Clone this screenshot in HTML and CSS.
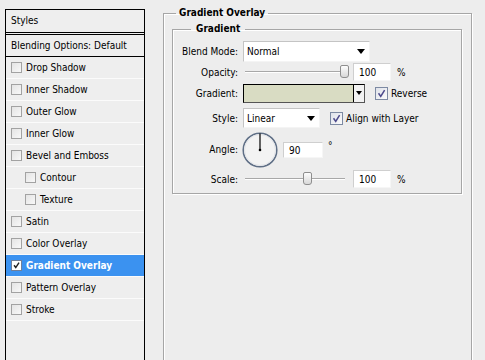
FILE: index.html
```html
<!DOCTYPE html>
<html lang="en">
<head>
  <meta charset="UTF-8" />
  <title>Layer Style - Gradient Overlay</title>
  <link rel="stylesheet" href="styles.css">
</head>
<body>
  <div class="dialog">

    <!-- styles list -->
    <div class="styles-list">
      <div class="list-head">Styles</div>
      <div class="list-blend">Blending Options: Default</div>
      <div class="list-item"><span class="cb"></span>Drop Shadow</div>
      <div class="list-item"><span class="cb"></span>Inner Shadow</div>
      <div class="list-item"><span class="cb"></span>Outer Glow</div>
      <div class="list-item"><span class="cb"></span>Inner Glow</div>
      <div class="list-item"><span class="cb"></span>Bevel and Emboss</div>
      <div class="list-item sub"><span class="cb"></span>Contour</div>
      <div class="list-item sub"><span class="cb"></span>Texture</div>
      <div class="list-item"><span class="cb"></span>Satin</div>
      <div class="list-item"><span class="cb"></span>Color Overlay</div>
      <div class="list-item active">
        <span class="cb checked">
          <svg viewBox="0 0 11 11"><path d="M2.5 5.2 L4.6 8 L8.6 2" fill="none" stroke="#222" stroke-width="1.8" /></svg>
        </span>Gradient Overlay
      </div>
      <div class="list-item"><span class="cb"></span>Pattern Overlay</div>
      <div class="list-item"><span class="cb"></span>Stroke</div>
    </div>

    <!-- settings -->
    <div class="panel">
      <fieldset class="group outer">
        <legend>Gradient Overlay</legend>
        <fieldset class="group inner">
          <legend>Gradient</legend>

          <div class="row r-blend">
            <span class="lbl">Blend Mode:</span>
            <div class="select blend-select">Normal<i class="arrow"></i></div>
          </div>

          <div class="row r-opacity">
            <span class="lbl">Opacity:</span>
            <div class="slider"><span class="thumb" style="left: 95px;"></span></div>
            <div class="num">100</div>
            <span class="unit">%</span>
          </div>

          <div class="row r-gradient">
            <span class="lbl">Gradient:</span>
            <div class="grad-box"><div class="grad-fill"></div><div class="grad-btn"><i class="arrow small"></i></div></div>
            <span class="check">
              <svg viewBox="0 0 13 13"><path d="M3 6.2 L5.6 10 L10.2 2.5" fill="none" stroke="#4d4a8c" stroke-width="1.8" /></svg>
            </span>
            <span class="check-lbl">Reverse</span>
          </div>

          <div class="row r-style">
            <span class="lbl">Style:</span>
            <div class="select style-select">Linear<i class="arrow"></i></div>
            <span class="check">
              <svg viewBox="0 0 13 13"><path d="M3 6.2 L5.6 10 L10.2 2.5" fill="none" stroke="#4d4a8c" stroke-width="1.8" /></svg>
            </span>
            <span class="check-lbl">Align with Layer</span>
          </div>

          <div class="row r-angle">
            <span class="lbl">Angle:</span>
            <svg class="dial" viewBox="0 0 36 36">
              <circle cx="18" cy="18" r="16.8" fill="#f3f3f3" stroke="#5f6f86" stroke-width="1.5" />
              <circle cx="18" cy="18" r="15.5" fill="none" stroke="#e2e4e8" stroke-width="1" />
              <line x1="18" y1="18" x2="18" y2="1.5" stroke="#000" stroke-width="1.2" />
              <circle cx="18" cy="18" r="1.3" fill="#000" />
            </svg>
            <div class="num angle-num">90</div>
            <span class="deg">°</span>
          </div>

          <div class="row r-scale">
            <span class="lbl">Scale:</span>
            <div class="slider"><span class="thumb" style="left: 58px;"></span></div>
            <div class="num">100</div>
            <span class="unit">%</span>
          </div>

        </fieldset>
      </fieldset>
    </div>

  </div>
</body>
</html>
```

FILE: styles.css
```css
body {
  margin: 0;
  background: #ededed;
  font-family: "DejaVu Sans Condensed", "Liberation Sans", sans-serif;
  font-size: 10px;
  color: #000;
  overflow: hidden;
}
.dialog {
  display: flex;
  gap: 18px;
  padding: 9px 0 0 5px;
  height: 360px;
  box-sizing: border-box;
  overflow: hidden;
}

/* styles list */
.styles-list {
  width: 140px;
  box-sizing: border-box;
  border: 1px solid #000;
  border-bottom: none;
  background: #eeeeee;
}
.list-head {
  height: 22px;
  line-height: 22px;
  padding-left: 5px;
  border-bottom: 3px double #000;
}
.list-blend {
  height: 21px;
  line-height: 21px;
  padding-left: 5px;
  border-bottom: 1px solid #000;
}
.list-item {
  height: 21px;
  display: flex;
  align-items: center;
  padding-left: 5px;
  border-bottom: 1px solid #fbfbfb;
}
.list-item.sub {
  padding-left: 19px;
}
.list-item.active {
  background: #3b92f0;
  color: #fff;
  font-weight: bold;
}
.cb {
  width: 11px;
  height: 11px;
  box-sizing: border-box;
  border: 1px solid #a2a2a2;
  background: linear-gradient(135deg, #e4e4e4, #f8f8f8);
  margin-right: 4px;
  flex-shrink: 0;
}
.cb.checked {
  background: #fff;
  border-color: #6f7f9a;
}
.cb svg {
  display: block;
  width: 100%;
  height: 100%;
}

/* group boxes */
.panel {
  width: 309px;
  margin-top: -2px;
}
.group {
  margin: 0;
  border: 1px solid #a6a6a6;
  box-shadow: inset 1px 1px 0 #fff, 1px 1px 0 #fff;
}
.group legend {
  font-weight: bold;
  line-height: 12px;
}
.outer {
  padding: 0 9px 0 8px;
  height: 360px;
}
.outer > legend {
  margin-left: 4px;
  padding: 0 3px;
}
.inner {
  margin-top: 4px;
  padding: 6px 0 2px 8px;
}
.inner > legend {
  margin-left: 10px;
  padding: 0 5px;
}

/* rows */
.row {
  display: flex;
  align-items: center;
}
.lbl {
  width: 57px;
  text-align: right;
  margin-right: 5px;
  flex-shrink: 0;
}
.r-blend { height: 21px; }
.r-opacity { height: 20px; }
.r-gradient { height: 22px; }
.r-style { height: 28px; }
.r-angle { height: 35px; }
.r-scale { height: 24px; }

.select {
  box-sizing: border-box;
  height: 21px;
  background: #fff;
  border: 1px solid;
  border-color: #c4c4c4 #f4f4f4 #f4f4f4 #c4c4c4;
  padding-left: 3px;
  display: flex;
  align-items: center;
  justify-content: space-between;
}
.blend-select { width: 127px; }
.style-select { width: 77px; height: 20px; }
.arrow {
  width: 0;
  height: 0;
  border-top: 5px solid #000;
  border-left: 4px solid transparent;
  border-right: 4px solid transparent;
  margin-right: 4px;
}
.arrow.small {
  border-top-width: 4px;
  border-left-width: 3px;
  border-right-width: 3px;
  margin: 0;
}

.slider {
  position: relative;
  width: 100px;
  height: 14px;
  margin-left: 2px;
  margin-right: 8px;
}
.slider::before {
  content: "";
  position: absolute;
  left: 0;
  right: 0;
  top: 6px;
  height: 1px;
  background: #a8a8a8;
  border-bottom: 1px solid #fff;
}
.thumb {
  position: absolute;
  top: 0;
  width: 9px;
  height: 13px;
  box-sizing: border-box;
  border: 1px solid #8e8e8e;
  border-radius: 2px 2px 3px 3px;
  background: linear-gradient(#fdfdfd, #d8d8d8);
}
.num {
  box-sizing: border-box;
  width: 38px;
  height: 18px;
  line-height: 17px;
  background: #fff;
  border: 1px solid;
  border-color: #cfcfcf #f6f6f6 #f6f6f6 #cfcfcf;
  padding-left: 5px;
}
.unit {
  margin-left: 6px;
}

.grad-box {
  display: flex;
  box-sizing: border-box;
  width: 122px;
  height: 19px;
  border: 1px solid #000;
  border-right-color: #555;
  border-bottom-color: #555;
}
.grad-fill {
  flex: 1;
  background: #d9dcc3;
}
.grad-btn {
  width: 10px;
  border-left: 1px solid #000;
  background: #f2f2f2;
  display: flex;
  align-items: center;
  justify-content: center;
}
.check {
  width: 13px;
  height: 13px;
  box-sizing: border-box;
  border: 1px solid #7d8aa3;
  background: linear-gradient(135deg, #dfe2ea, #fbfbfb);
  margin-left: 10px;
  margin-right: 3px;
}
.check svg {
  display: block;
  width: 100%;
  height: 100%;
}

.dial {
  width: 36px;
  height: 36px;
  margin-left: -1px;
  margin-right: 5px;
}
.angle-num {
  width: 40px;
  height: 16px;
  line-height: 15px;
}
.deg {
  margin-left: 5px;
  align-self: flex-start;
  margin-top: 8px;
}
```
